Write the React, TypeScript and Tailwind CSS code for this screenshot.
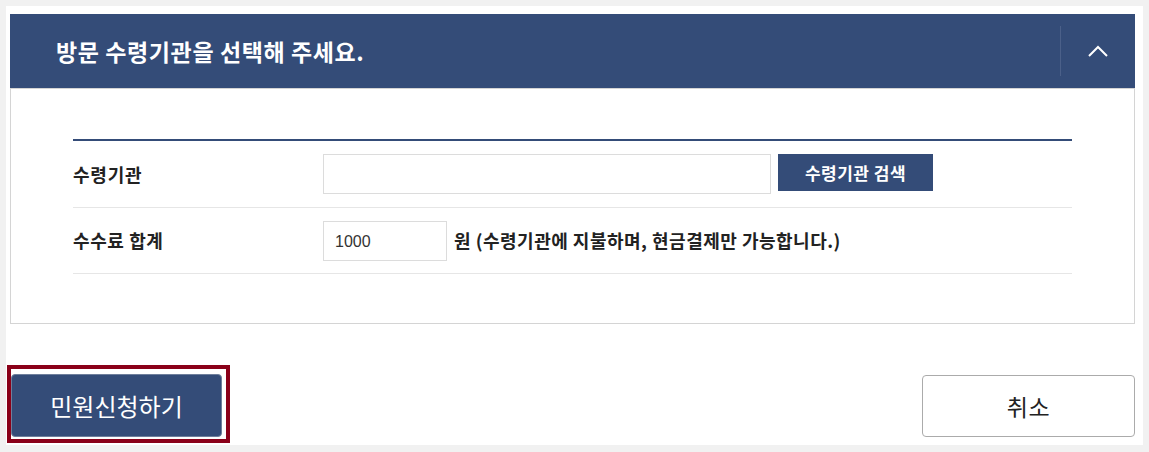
import { useState } from "react";

const font = { fontFamily: '"Noto Sans CJK KR", "Noto Sans", sans-serif' };

export default function App() {
  const [agency, setAgency] = useState("");
  const [fee, setFee] = useState("1000");

  return (
    <div className="min-h-screen bg-[#f1f1f1] p-[6px]" style={font}>
      <div className="bg-white pt-[8px] pl-[4px] pr-[8px] pb-[2px]">
        {/* header */}
        <div className="flex h-[74px] items-center justify-between bg-[#344c78] pl-[46px]">
          <h2 className="text-[23px] font-bold leading-none tracking-[0.6px] text-white">
            방문 수령기관을 선택해 주세요.
          </h2>
          <button className="flex h-[50px] w-[75px] items-center justify-center border-l border-[#4b6089]">
            <svg width="20" height="12" viewBox="0 0 20 12" fill="none">
              <path d="M1 11 L10 2 L19 11" stroke="white" strokeWidth="2" />
            </svg>
          </button>
        </div>

        {/* body */}
        <div className="border border-[#d4d4d4] px-[62px] pt-[50px] pb-[49px]">
          <div className="border-t-2 border-[#344c78]">
            <div className="flex h-[67px] items-center border-b border-[#e6e6e6]">
              <div className="w-[250px] text-[18px] font-bold tracking-[0.8px] text-[#222]">수령기관</div>
              <div className="flex items-start gap-[7px]">
                <input
                  value={agency}
                  onChange={(e) => setAgency(e.target.value)}
                  className="h-[40px] w-[448px] border border-[#dcdcdc] px-3 text-[16px] outline-none"
                />
                <button className="h-[37px] w-[155px] bg-[#344c78] text-[17px] font-bold tracking-[0.5px] text-white">
                  수령기관 검색
                </button>
              </div>
            </div>
            <div className="flex h-[66px] items-center border-b border-[#e6e6e6]">
              <div className="w-[250px] text-[18px] font-bold tracking-[0.6px] text-[#222]">수수료 합계</div>
              <div className="flex items-center gap-[7px]">
                <input
                  value={fee}
                  onChange={(e) => setFee(e.target.value)}
                  className="h-[40px] w-[124px] border border-[#dcdcdc] pl-[11px] pt-[2px] font-['Liberation_Sans',sans-serif] text-[16px] text-[#333] outline-none"
                />
                <span className="text-[18px] font-bold tracking-[0.5px] text-[#222]">
                  원 (수령기관에 지불하며, 현금결제만 가능합니다.)
                </span>
              </div>
            </div>
          </div>
        </div>

        {/* actions */}
        <div className="mt-[41px] flex items-end justify-between">
          <div className="-ml-[3px] border-4 border-[#8a0019] pt-[5px] pr-[4px] pb-[2px]">
            <button className="h-[63px] w-[211px] rounded-[4px] border border-[#6f7f9c] bg-[#344c78] text-[24px] text-white">
              민원신청하기
            </button>
          </div>
          <button className="mb-[6px] h-[62px] w-[213px] rounded-[4px] border border-[#ababab] bg-white text-[23px] tracking-[0.5px] text-[#222]">
            취소
          </button>
        </div>
      </div>
    </div>
  );
}
